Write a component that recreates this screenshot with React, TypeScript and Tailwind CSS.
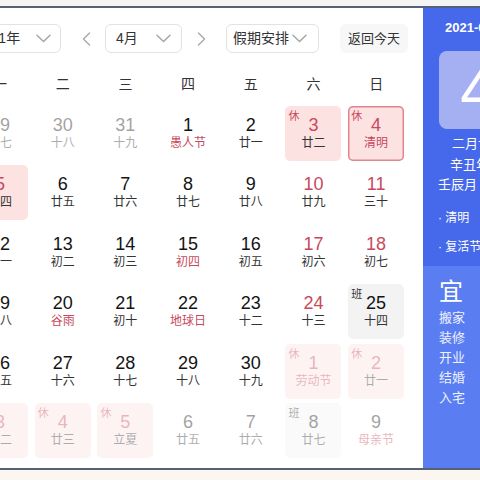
import React from 'react';

type Cell = {
  d: number;
  l: string;
  o?: boolean;
  rest?: boolean;
  work?: boolean;
  sel?: boolean;
  nr?: boolean;
  lr?: boolean;
};

const rows: Cell[][] = [
  [
    { d: 29, l: '十七', o: true },
    { d: 30, l: '十八', o: true },
    { d: 31, l: '十九', o: true },
    { d: 1, l: '愚人节', lr: true },
    { d: 2, l: '廿一' },
    { d: 3, l: '廿二', rest: true },
    { d: 4, l: '清明', rest: true, sel: true, lr: true },
  ],
  [
    { d: 5, l: '廿四', rest: true },
    { d: 6, l: '廿五' },
    { d: 7, l: '廿六' },
    { d: 8, l: '廿七' },
    { d: 9, l: '廿八' },
    { d: 10, l: '廿九', nr: true },
    { d: 11, l: '三十', nr: true },
  ],
  [
    { d: 12, l: '初一' },
    { d: 13, l: '初二' },
    { d: 14, l: '初三' },
    { d: 15, l: '初四', lr: true },
    { d: 16, l: '初五' },
    { d: 17, l: '初六', nr: true },
    { d: 18, l: '初七', nr: true },
  ],
  [
    { d: 19, l: '初八' },
    { d: 20, l: '谷雨', lr: true },
    { d: 21, l: '初十' },
    { d: 22, l: '地球日', lr: true },
    { d: 23, l: '十二' },
    { d: 24, l: '十三', nr: true },
    { d: 25, l: '十四', work: true },
  ],
  [
    { d: 26, l: '十五' },
    { d: 27, l: '十六' },
    { d: 28, l: '十七' },
    { d: 29, l: '十八' },
    { d: 30, l: '十九' },
    { d: 1, l: '劳动节', rest: true, o: true, lr: true },
    { d: 2, l: '廿一', rest: true, o: true },
  ],
  [
    { d: 3, l: '廿二', rest: true, o: true },
    { d: 4, l: '廿三', rest: true, o: true },
    { d: 5, l: '立夏', rest: true, o: true },
    { d: 6, l: '廿五', o: true },
    { d: 7, l: '廿六', o: true },
    { d: 8, l: '廿七', work: true, o: true },
    { d: 9, l: '母亲节', o: true, lr: true },
  ],
];

const weekdays = ['一', '二', '三', '四', '五', '六', '日'];

function ChevronDown() {
  return (
    <svg width="15" height="9" viewBox="0 0 15 9" fill="none">
      <path d="M1 1.2l6.5 6.3L14 1.2" stroke="#a3a3a3" strokeWidth="1.4" strokeLinecap="round" strokeLinejoin="round" />
    </svg>
  );
}

function Arrow({ dir }: { dir: 'left' | 'right' }) {
  return (
    <div className="w-[16px] h-[29px] flex items-center justify-center">
      <svg width="9" height="14" viewBox="0 0 9 14" fill="none">
        {dir === 'left' ? (
          <path d="M7.5 1L1.5 7l6 6" stroke="#a8a8a8" strokeWidth="1.4" strokeLinecap="round" strokeLinejoin="round" />
        ) : (
          <path d="M1.5 1l6 6-6 6" stroke="#a8a8a8" strokeWidth="1.4" strokeLinecap="round" strokeLinejoin="round" />
        )}
      </svg>
    </div>
  );
}

function DayCell({ c }: { c: Cell }) {
  const bg = c.rest ? 'bg-[#fde2e2]' : c.work ? 'bg-[#f3f3f3]' : '';
  const sel = c.sel ? 'shadow-[inset_0_0_0_1.5px_#e0848e]' : '';
  const numColor = c.rest || c.nr ? 'text-[#c8495d]' : 'text-[#141414]';
  const lunarColor = c.lr ? 'text-[#c8495d]' : 'text-[#333333]';
  return (
    <div className={`relative flex flex-col items-center rounded-[5px] pt-[8px] ${bg} ${sel} ${c.o ? 'opacity-40' : ''}`}>
      {c.rest && (
        <span className="absolute left-[3px] top-[4px] text-[11px] leading-[13px] text-[#c8495d]">休</span>
      )}
      {c.work && (
        <span className="absolute left-[3px] top-[4px] text-[11px] leading-[13px] text-[#333333]">班</span>
      )}
      <div className={`text-[18px] leading-[22px] ${numColor}`}>{c.d}</div>
      <div className={`text-[12px] leading-[14px] ${lunarColor}`}>{c.l}</div>
    </div>
  );
}

export default function App() {
  return (
    <div className="w-[480px] h-[480px] overflow-hidden flex flex-col bg-[#f4f4f4] font-['Liberation_Sans','Noto_Sans_CJK_SC',sans-serif]">
      <div className="h-[6px] shrink-0 bg-[#f5f5f5]" />
      <div className="h-[464px] shrink-0 flex border-t-2 border-b-2 border-[#566176] bg-white">
        {/* Left calendar section */}
        <div className="w-[463px] shrink-0 ml-[-40px] bg-white pl-[12px] pt-[16px]">
          {/* Header controls */}
          <div className="flex items-center ml-[-8px] h-[29px]">
            <div className="w-[97px] h-[29px] flex items-center justify-between pl-[10px] pr-[9px] border border-[#e2e2e2] rounded-[6px] text-[14px] text-[#333]">
              <span>2021年</span>
              <ChevronDown />
            </div>
            <div className="ml-[17px]">
              <Arrow dir="left" />
            </div>
            <div className="ml-[11px] w-[77px] h-[29px] flex items-center justify-between pl-[10px] pr-[10px] border border-[#e2e2e2] rounded-[6px] text-[14px] text-[#333]">
              <span>4月</span>
              <ChevronDown />
            </div>
            <div className="ml-[11px]">
              <Arrow dir="right" />
            </div>
            <div className="ml-[17px] w-[93px] h-[29px] flex items-center justify-between pl-[6px] pr-[11px] border border-[#e2e2e2] rounded-[6px] text-[14px] text-[#333]">
              <span>假期安排</span>
              <ChevronDown />
            </div>
            <div className="ml-[21px] w-[68px] h-[29px] flex items-center justify-center rounded-[6px] bg-[#f7f7f8] text-[13px] text-[#333]">
              返回今天
            </div>
          </div>

          {/* Weekday header */}
          <div className="mt-[21px] grid grid-cols-[repeat(7,56px)] gap-x-[6.7px] h-[20px]">
            {weekdays.map((w) => (
              <div key={w} className="flex items-center justify-center text-[14px] leading-[20px] text-[#333]">
                {w}
              </div>
            ))}
          </div>

          {/* Day grid */}
          <div className="mt-[12px] grid grid-cols-[repeat(7,56px)] grid-rows-[repeat(6,55px)] gap-x-[6.7px] gap-y-[4.4px]">
            {rows.flat().map((c, i) => (
              <DayCell key={i} c={c} />
            ))}
          </div>
        </div>

        {/* Right blue panel */}
        <div className="w-[110px] shrink-0 flex flex-col bg-[#4668ea] text-white">
          <div className="pl-[22px] mt-[10px] text-[13px] font-bold leading-[20px] whitespace-nowrap">2021-04-04 星期日</div>
          <div className="ml-[16px] mt-[13px] w-[78px] h-[78px] rounded-[8px] bg-[#a4b0f2] flex items-center justify-center text-[64px] leading-none text-white">
            4
          </div>
          <div className="mt-[5px] text-[13px] leading-[20.5px] whitespace-nowrap">
            <div className="pl-[29px]">二月廿三</div>
            <div className="pl-[27px]">辛丑年【牛年】</div>
            <div className="pl-[15px]">壬辰月 丁卯日</div>
          </div>
          <div className="mt-[8px] pl-[15px] text-[12px] leading-[29px] whitespace-nowrap">
            <div>· 清明</div>
            <div>· 复活节</div>
          </div>
          <div className="mt-[4.5px] flex-1 bg-[#5a7ef2] pl-[16px] pt-[12px]">
            <div className="text-[24px] leading-[28px]">宜</div>
            <div className="mt-[1.5px] text-[13px] leading-[20px] text-[#eef1ff]">
              <div>搬家</div>
              <div>装修</div>
              <div>开业</div>
              <div>结婚</div>
              <div>入宅</div>
            </div>
          </div>
        </div>
      </div>
      <div className="flex-1 bg-[#fbf6ef]" />
    </div>
  );
}
